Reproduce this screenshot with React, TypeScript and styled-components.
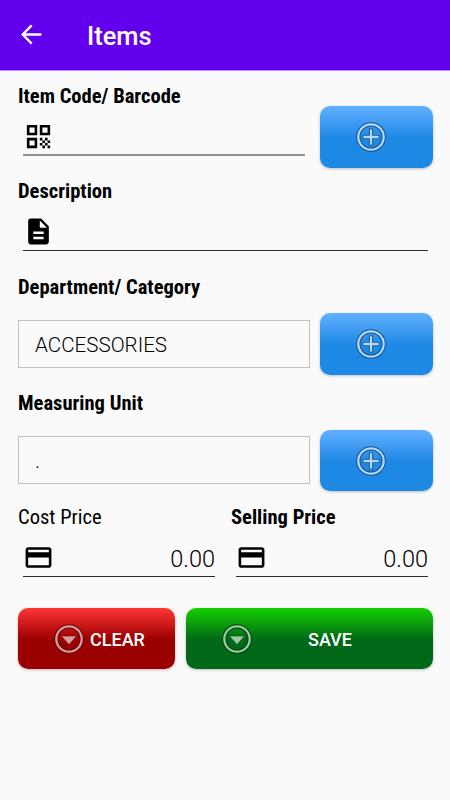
import React from "react";
import styled, { createGlobalStyle, css } from "styled-components";

const GlobalStyle = createGlobalStyle`
  * { box-sizing: border-box; }
  body { margin: 0; background: #fafafa; font-family: Roboto, "Liberation Sans", sans-serif; }
  button { font-family: inherit; }
`;

const Screen = styled.div`
  width: 450px;
  height: 800px;
  background: #fafafa;
  color: #000;
  overflow: hidden;
`;

const AppBar = styled.header`
  display: flex;
  align-items: center;
  height: 71px;
  padding: 0 0 1px 19px;
  background: #6200ee;
  border-bottom: 1px solid #b98cf7;
`;

const Title = styled.h1`
  margin: 3px 0 0 43px;
  font-size: 25.5px;
  line-height: 32px;
  font-weight: 500;
  color: #fff;
`;

const Form = styled.main`
  padding: 13px 17px 0 18px;
`;

const Row = styled.div<{ $height: number }>`
  display: flex;
  justify-content: space-between;
  height: ${(p) => p.$height}px;
`;

const Field = styled.div<{ $width: number }>`
  width: ${(p) => p.$width}px;
  flex: none;
`;

const Label = styled.label<{ $light?: boolean }>`
  display: block;
  height: 24px;
  line-height: 24px;
  font-family: "Roboto Condensed", Roboto, sans-serif;
  font-stretch: condensed;
  font-size: 20.55px;
  font-weight: ${(p) => (p.$light ? 400 : 700)};
  white-space: nowrap;
`;

const Underlined = styled.div<{ $soft?: boolean }>`
  display: flex;
  align-items: center;
  justify-content: space-between;
  height: 48px;
  margin: 0 5px;
  padding-top: 10px;
  border-bottom: 1px solid #2c2c2c;
  ${(p) =>
    p.$soft &&
    css`
      padding-top: 11px;
      border-bottom: 2px solid #909090;
    `}
`;

const Amount = styled.span`
  font-size: 23.5px;
  line-height: 28px;
  font-weight: 350;
  padding-top: 3px;
`;

const Select = styled.div`
  display: flex;
  align-items: center;
  width: 292px;
  height: 48px;
  margin-top: 21px;
  padding: 1px 16px 0;
  border: 1px solid #c2c2c2;
  font-size: 20.6px;
  font-weight: 350;
`;

const tones = {
  blue: "linear-gradient(#62b0ff 0%, #1e88e5 52%, #1e88e5 100%)",
  red: "linear-gradient(#ff3535 0%, #9b0000 52%, #9b0000 100%)",
  green: "linear-gradient(#14d000 0%, #006817 52%, #006817 100%)",
};

const Button = styled.button<{ $tone: keyof typeof tones; $width: number }>`
  display: flex;
  align-items: center;
  flex: none;
  width: ${(p) => p.$width}px;
  height: 61.4px;
  padding: 0;
  border: 0;
  border-radius: 10px;
  background: ${(p) => tones[p.$tone]};
  box-shadow: 0 1px 3px rgba(0, 0, 0, 0.25);
  color: #fff;
  font-size: 18px;
  font-weight: 500;
`;

const AddButton = styled(Button)<{ $top: number }>`
  margin: ${(p) => p.$top}px 0 0 auto;
  padding-left: 36.4px;
`;

const ClearButton = styled(Button)`
  padding-left: 36px;
  gap: 6px;
`;

const SaveButton = styled(Button)`
  padding-left: 36px;
  gap: 56px;
`;

const Caption = styled.span`
  padding-top: 2px;
`;

const Actions = styled.div`
  display: flex;
  justify-content: space-between;
`;

const Glyph = styled.svg`
  display: block;
  flex: none;
`;

const BackIcon = () => (
  <Glyph width="25" height="25" viewBox="0 0 24 24" fill="#fff">
    <path d="M21.500 10.800H6.300l6.700-6.700L11.300 2.500 2 12l9.300 9.500 1.700-1.600-6.700-6.700h15.200z" />
  </Glyph>
);

const QrIcon = () => (
  <Glyph width="31" height="31" viewBox="0 0 24 24">
    <path d="M3 11h8V3H3v8zm2-6h4v4H5V5zM3 21h8v-8H3v8zm2-6h4v4H5v-4zM13 3v8h8V3h-8zm6 6h-4V5h4v4zM19 19h2v2h-2zM13 13h2v2h-2zM15 15h2v2h-2zM13 17h2v2h-2zM15 19h2v2h-2zM17 17h2v2h-2zM17 13h2v2h-2zM19 15h2v2h-2z" />
  </Glyph>
);

const DocumentIcon = () => (
  <Glyph width="31" height="31" viewBox="0 0 24 24">
    <path d="M14 2H6c-1.100 0-1.990.9-1.990 2L4 20c0 1.100.89 2 1.990 2H18c1.100 0 2-.9 2-2V8l-6-6zm2 16H8v-2h8v2zm0-4H8v-2h8v2zm-3-5V3.500L18.500 9H13z" />
  </Glyph>
);

const CardIcon = () => (
  <Glyph width="31" height="31" viewBox="0 0 24 24">
    <path d="M20 4H4c-1.110 0-1.990.89-1.990 2L2 18c0 1.110.89 2 2 2h16c1.110 0 2-.89 2-2V6c0-1.110-.89-2-2-2zm0 14H4v-6h16v6zm0-10H4V6h16v2z" />
  </Glyph>
);

const PlusBadge = () => (
  <Glyph width="30" height="30" viewBox="0 0 30 30" fill="none">
    <circle cx="15" cy="15" r="12.700" stroke="#12508c" strokeWidth="4.200" />
    <circle cx="15" cy="15" r="12.700" stroke="#b4d9f8" strokeWidth="2.300" />
    <path d="M15 6.500v17M6.500 15h17" stroke="#12508c" strokeWidth="4.200" />
    <path d="M15 7.300v15.400M7.300 15h15.400" stroke="#b4d9f8" strokeWidth="2.300" />
  </Glyph>
);

const DownBadge = ({ dark, light }: { dark: string; light: string }) => (
  <Glyph width="30" height="30" viewBox="0 0 30 30" fill="none">
    <circle cx="15" cy="15" r="12.700" stroke={dark} strokeWidth="4.200" />
    <circle cx="15" cy="15" r="12.700" stroke={light} strokeWidth="2.300" />
    <path d="M7.200 11.900h15.600L15 20.700z" fill={light} stroke={dark} strokeWidth=".7" />
  </Glyph>
);

export default function App() {
  return (
    <>
      <GlobalStyle />
      <Screen>
        <AppBar>
          <BackIcon />
          <Title>Items</Title>
        </AppBar>
        <Form>
          <Row $height={95}>
            <Field $width={292}>
              <Label>Item Code/ Barcode</Label>
              <Underlined $soft>
                <QrIcon />
              </Underlined>
            </Field>
            <AddButton $tone="blue" $width={113} $top={22.4} aria-label="Add item code">
              <PlusBadge />
            </AddButton>
          </Row>
          <Row $height={96}>
            <Field $width={415}>
              <Label>Description</Label>
              <Underlined>
                <DocumentIcon />
              </Underlined>
            </Field>
          </Row>
          <Row $height={116}>
            <Field $width={292}>
              <Label>Department/ Category</Label>
              <Select>ACCESSORIES</Select>
            </Field>
            <AddButton $tone="blue" $width={113} $top={38.4} aria-label="Add department">
              <PlusBadge />
            </AddButton>
          </Row>
          <Row $height={114}>
            <Field $width={292}>
              <Label>Measuring Unit</Label>
              <Select>.</Select>
            </Field>
            <AddButton $tone="blue" $width={113} $top={38.9} aria-label="Add measuring unit">
              <PlusBadge />
            </AddButton>
          </Row>
          <Row $height={103}>
            <Field $width={202}>
              <Label $light>Cost Price</Label>
              <Underlined>
                <CardIcon />
                <Amount>0.00</Amount>
              </Underlined>
            </Field>
            <Field $width={202}>
              <Label>Selling Price</Label>
              <Underlined>
                <CardIcon />
                <Amount>0.00</Amount>
              </Underlined>
            </Field>
          </Row>
          <Actions>
            <ClearButton $tone="red" $width={157.4}>
              <DownBadge dark="#5f0808" light="#dd9a9a" />
              <Caption>CLEAR</Caption>
            </ClearButton>
            <SaveButton $tone="green" $width={247}>
              <DownBadge dark="#03420f" light="#9bcaa2" />
              <Caption>SAVE</Caption>
            </SaveButton>
          </Actions>
        </Form>
      </Screen>
    </>
  );
}
